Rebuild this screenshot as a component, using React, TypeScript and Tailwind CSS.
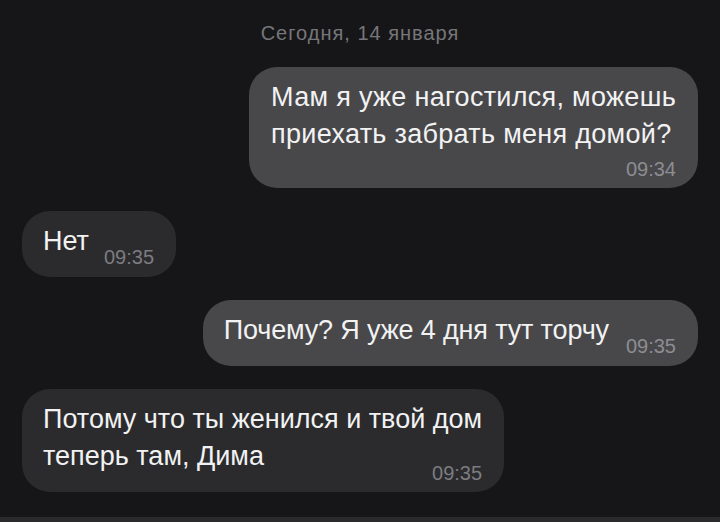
const outTime = "text-[20px] leading-[20px] text-[#8d8d91]";
const inTime = "text-[20px] leading-[20px] text-[#7c7c80]";
const msgText = "text-[27px] leading-[37px] text-[#f2f2f2] whitespace-nowrap";

export default function App() {
  return (
    <div
      className="w-[720px] h-[522px] bg-[#161618] flex flex-col overflow-hidden"
      style={{ fontFamily: '"Liberation Sans", Arial, sans-serif' }}
    >
      <div className="flex-1 flex flex-col px-[22px] pt-[21px] gap-[23px]">
        <p className="text-center text-[20px] leading-[24px] tracking-[1px] text-[#76767a] mb-[-1px]">
          Сегодня, 14 января
        </p>

        {/* outgoing, two lines */}
        <div className="self-end flex flex-col rounded-[28px] bg-[#48484b] pl-[22px] pr-[22px] pt-[12px] pb-[9px]">
          <p className={`${msgText} tracking-[0.3px]`}>
            Мам я уже нагостился, можешь
            <br />
            приехать забрать меня домой?
          </p>
          <span className={`${outTime} self-end mt-[6px]`}>09:34</span>
        </div>

        {/* incoming, single */}
        <div className="self-start flex items-start gap-[15px] rounded-[28px] bg-[#2b2b2e] pl-[21px] pr-[22px] pt-[12px] pb-[10px]">
          <p className={msgText}>Нет</p>
          <span className={`${inTime} mt-[24px]`}>09:35</span>
        </div>

        {/* outgoing, single */}
        <div className="self-end flex items-start gap-[17px] rounded-[28px] bg-[#48484b] pl-[21px] pr-[22px] pt-[12px] pb-[10px]">
          <p className={`${msgText} tracking-[-0.15px]`}>Почему? Я уже 4 дня тут торчу</p>
          <span className={`${outTime} mt-[24px]`}>09:35</span>
        </div>

        {/* incoming, two lines */}
        <div className="self-start flex flex-col rounded-[28px] bg-[#2b2b2e] pl-[21px] pr-[22px] pt-[12px] pb-[9px]">
          <p className={msgText}>Потому что ты женился и твой дом</p>
          <div className="flex items-start justify-between gap-[15px]">
            <p className={msgText}>теперь там, Дима</p>
            <span className={`${inTime} mt-[25px]`}>09:35</span>
          </div>
        </div>
      </div>
      <div className="h-[5px] bg-[#2a2a2d]" />
    </div>
  );
}
